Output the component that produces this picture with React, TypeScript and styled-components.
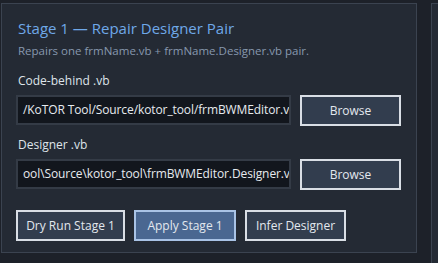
import styled, { createGlobalStyle } from 'styled-components';

const GlobalStyle = createGlobalStyle`
  html, body {
    margin: 0;
    padding: 0;
    background: #1d2129;
    font-family: 'Open Sans', 'Noto Sans', sans-serif;
  }
`;

const Page = styled.div`
  display: flex;
  gap: 14px;
  padding: 3px 0 0 1px;
  height: 260px;
  overflow: hidden;
`;

const Panel = styled.section`
  box-sizing: border-box;
  width: 416px;
  height: 250px;
  flex-shrink: 0;
  background: #242a34;
  border: 1px solid #3b4350;
  padding: 13px 14px 0 14px;
  display: flex;
  flex-direction: column;
`;

const SidePanel = styled.section`
  width: 40px;
  height: 300px;
  flex-shrink: 0;
  background: #242a34;
  border: 1px solid #3b4350;
`;

const Title = styled.h2`
  margin: 0 0 0 2px;
  font-size: 15px;
  font-weight: 400;
  color: #6fa8e8;
  line-height: 22px;
`;

const Subtitle = styled.p`
  margin: 4px 0 0 2px;
  font-size: 11.5px;
  color: #8798ae;
  line-height: 16px;
`;

const Label = styled.div<{ $top: number }>`
  margin: ${(p) => p.$top}px 0 0 2px;
  font-size: 12px;
  color: #dfe4ea;
  line-height: 16px;
`;

const Row = styled.div<{ $top: number }>`
  display: flex;
  gap: 9px;
  margin-top: ${(p) => p.$top}px;
`;

const PathBox = styled.div`
  box-sizing: border-box;
  width: 275px;
  height: 30px;
  background: #12161d;
  border: 2px solid #343b46;
  padding: 0 5px;
  color: #e6eaef;
  font-size: 12px;
  letter-spacing: -0.1px;
  line-height: 26px;
  white-space: nowrap;
  overflow: hidden;
`;

const Button = styled.button<{ $primary?: boolean; $w: number }>`
  box-sizing: border-box;
  width: ${(p) => p.$w}px;
  height: 31px;
  background: ${(p) => (p.$primary ? '#4a6791' : '#323d4e')};
  border: 2px solid ${(p) => (p.$primary ? '#a9c3e6' : '#d9dee5')};
  color: #e3e8ee;
  font-family: inherit;
  font-size: 12px;
  padding: 0;
  cursor: pointer;
`;

export default function App() {
  return (
    <>
      <GlobalStyle />
      <Page>
        <Panel>
          <Title>Stage 1 — Repair Designer Pair</Title>
          <Subtitle>Repairs one frmName.vb + frmName.Designer.vb pair.</Subtitle>
          <Label $top={14}>Code-behind .vb</Label>
          <Row $top={6}>
            <PathBox>/KoTOR Tool/Source/kotor_tool/frmBWMEditor.v</PathBox>
            <Button $w={101}>Browse</Button>
          </Row>
          <Label $top={11}>Designer .vb</Label>
          <Row $top={6}>
            <PathBox>ool\Source\kotor_tool\frmBWMEditor.Designer.v</PathBox>
            <Button $w={101}>Browse</Button>
          </Row>
          <Row $top={20}>
            <Button $w={109}>Dry Run Stage 1</Button>
            <Button $w={102} $primary>Apply Stage 1</Button>
            <Button $w={101}>Infer Designer</Button>
          </Row>
        </Panel>
        <SidePanel />
      </Page>
    </>
  );
}
